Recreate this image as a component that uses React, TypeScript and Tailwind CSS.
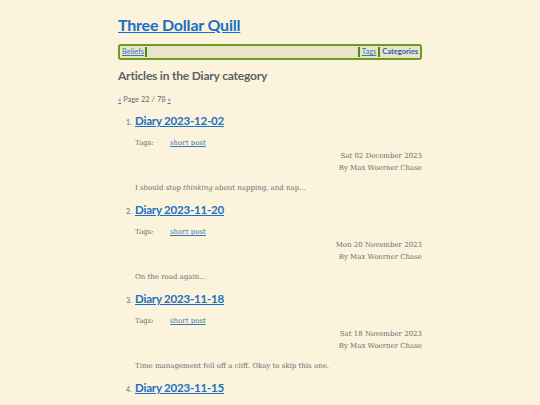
import React from "react";

const posts = [
  { title: "Diary 2023-12-02", date: "Sat 02 December 2023", excerpt: <>I should stop <em>thinking</em> about napping, and nap...</> },
  { title: "Diary 2023-11-20", date: "Mon 20 November 2023", excerpt: <>On the road again...</> },
  { title: "Diary 2023-11-18", date: "Sat 18 November 2023", excerpt: <>Time management fell off a cliff. Okay to skip this one.</> },
  { title: "Diary 2023-11-15", date: "Wed 15 November 2023", excerpt: <>Nothing much.</> },
];

const sans = "font-['Lato','Open_Sans',sans-serif]";
const serif = "font-['DejaVu_Serif',serif]";

export default function App() {
  return (
    <div className="min-h-screen bg-[#fbf3dc] text-[#555a5e]">
      <div className="w-[304px] mx-auto pt-[13px]">
        <h1 className={`${sans} text-[16px] font-bold leading-[24px] tracking-[-0.2px]`}>
          <a href="#" className="text-[#1a70c4] underline">Three Dollar Quill</a>
        </h1>
        <nav className={`${sans} mt-[7px] h-[16px] border-2 border-[#6b9b1f] rounded-[3px] bg-[#ebe4cd] flex items-center text-[7.5px] px-[2px]`}>
          <a href="#" className="text-[#3a78b8] underline">Beliefs</a>
          <span className="w-[2px] h-[10px] bg-[#4d8a10] ml-[1px]" />
          <span className="flex-1" />
          <span className="w-[2px] h-[10px] bg-[#4d8a10] mr-[2px]" />
          <a href="#" className="text-[#3a78b8] underline">Tags</a>
          <span className="w-[2px] h-[10px] bg-[#4d8a10] mx-[2px]" />
          <a href="#" className="text-[#2a5f9e] font-bold">Categories</a>
        </nav>
        <h2 className={`${sans} mt-[7px] text-[12px] font-bold leading-[18px] tracking-[-0.2px] text-[#5c6266]`}>Articles in the Diary category</h2>
        <p className={`${sans} mt-[10px] text-[7.5px] leading-[10px] text-[#6a6e70]`}>
          <a href="#" className="text-[#3a78b8] underline">«</a> Page 22 / 78 <a href="#" className="text-[#3a78b8] underline">»</a>
        </p>
        <ol className="mt-[7px] pl-[17px]">
          {posts.map((p, i) => (
            <li key={i} className="mb-[7px]">
              <div className="flex items-baseline">
                <span className={`${sans} text-[7px] text-[#6a6e70] w-[9px] ml-[-9px]`}>{i + 1}.</span>
                <a href="#" className={`${sans} text-[11.5px] font-bold leading-[18px] tracking-[-0.2px] text-[#1a70c4] underline`}>{p.title}</a>
              </div>
              <div className={`${serif} text-[7px] text-[#6c6e70]`}>
                <div className="mt-[7px] flex leading-[12px]">
                  <span className="w-[35px]">Tags:</span>
                  <a href="#" className="text-[#3a78b8] underline">short post</a>
                </div>
                <div className="text-right leading-[12px] mt-[1px]">{p.date}</div>
                <div className="text-right leading-[12px]">By Max Woerner Chase</div>
                <p className="mt-[8px] leading-[12px]">{p.excerpt}</p>
              </div>
            </li>
          ))}
        </ol>
      </div>
    </div>
  );
}
